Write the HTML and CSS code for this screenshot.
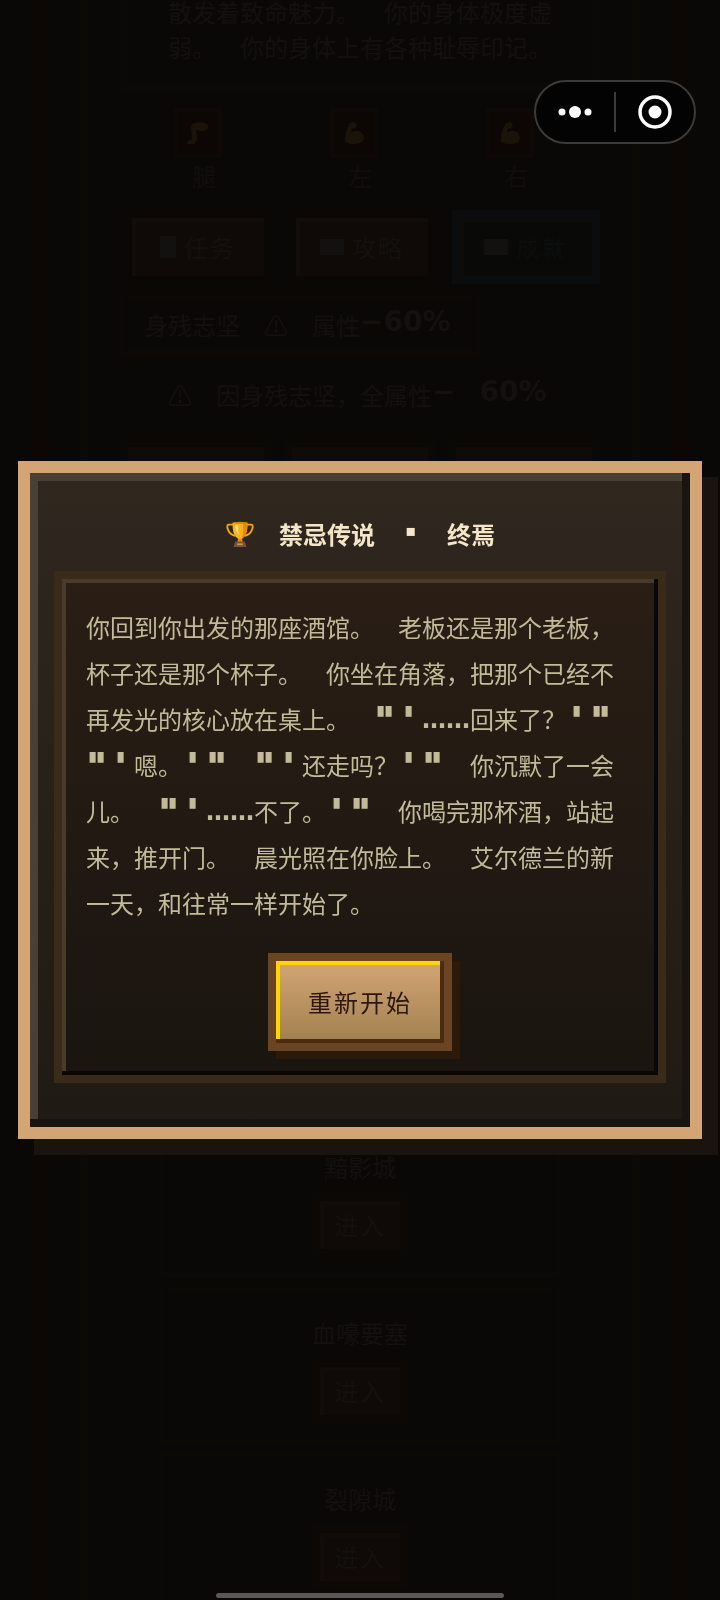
FILE: index.html
```html
<!DOCTYPE html>
<html lang="zh-CN">
<head>
    <meta charset="UTF-8">
    <meta name="viewport" content="width=device-width, initial-scale=1.0">
    <title>禁忌传说</title>
    <link rel="stylesheet" href="styles.css">
</head>
<body>
    <svg class="sprites" width="0" height="0" aria-hidden="true">
        <symbol id="arm" viewBox="0 0 24 24">
            <path d="M8 2l5-1 2 4-3 3-2-1-1 5c3-3 8-3 11 0 3 4 2 9-2 10-5 2-12 1-15-1C3 15 4 8 8 2z"/>
        </symbol>
        <symbol id="leg" viewBox="0 0 24 24">
            <path d="M6 3c6-3 14-2 16 1 1 4-2 6-6 6l-6-1 1 9-2 5H1l1-3 4-2L5 6z"/>
        </symbol>
    </svg>

    <div class="frame">
        <div class="page">
            <section class="intro">散发着致命魅力。　你的身体极度虚弱。　你的身体上有各种耻辱印记。</section>

            <div class="limbs">
                <div class="limb"><svg class="limb-icon"><use href="#leg"/></svg><span class="limb-name">腿</span></div>
                <div class="limb"><svg class="limb-icon"><use href="#arm"/></svg><span class="limb-name">左</span></div>
                <div class="limb"><svg class="limb-icon"><use href="#arm"/></svg><span class="limb-name">右</span></div>
            </div>

            <div class="menu">
                <button class="menu-button"><i class="note"></i>任务</button>
                <button class="menu-button"><i class="book"></i>攻略</button>
                <button class="menu-button blue"><i class="book"></i>成就</button>
            </div>

            <div class="status">身残志坚　⚠　属性<b>−60%</b></div>
            <p class="warning">⚠　因身残志坚，全属性<b>−</b>　<b>60%</b></p>

            <div class="slots">
                <div class="slot"></div>
                <div class="slot"></div>
                <div class="slot"></div>
            </div>

            <div class="cities">
                <div class="city"><span>黯影城</span><button class="enter">进入</button></div>
                <div class="city"><span>血嚎要塞</span><button class="enter">进入</button></div>
                <div class="city"><span>裂隙城</span><button class="enter">进入</button></div>
            </div>
        </div>
    </div>

    <div class="overlay">
        <div class="modal" role="dialog" aria-labelledby="ending-title">
            <h1 class="title" id="ending-title">
                <svg class="trophy" viewBox="0 0 30 30" aria-hidden="true">
                    <path d="M8 5H3c-2 0-2 2-1 5 1 4 4 6 8 7M22 5h5c2 0 2 2 1 5-1 4-4 6-8 7" fill="none" stroke="#f2a30f" stroke-width="2"/>
                    <path d="M7 3h16c0 9-1 14-6 17v3h-4v-3C8 17 7 12 7 3z" fill="#fbb01c"/>
                    <path d="M18 3h5c0 9-1 14-6 17 1-4 2-9 1-17z" fill="#e8890c"/>
                    <path d="M10 5h3c0 5 0 8 1 11-3-2-4-6-4-11z" fill="#ffe08a"/>
                    <ellipse cx="15" cy="3" rx="8" ry="1" fill="#d9820b"/>
                    <path d="M13 20h4l1 4h-6z" fill="#e8890c"/>
                    <path d="M10 23h10l2 6H8z" fill="#75523f"/>
                    <path d="M12 25h6v2h-6z" fill="#c9973c"/>
                </svg>
                <span>　禁忌传说　<span class="dot">▪</span>　终焉</span>
            </h1>
            <div class="story">
                <p class="story-text">你回到你出发的那座酒馆。　老板还是那个老板，杯子还是那个杯子。　你坐在角落，把那个已经不再发光的核心放在桌上。　<span class="quote">"</span><span class="quote">'</span><span class="ellipsis">……</span>回来了？<span class="quote">'</span><span class="quote">"</span><br><span class="quote">"</span><span class="quote">'</span>嗯。<span class="quote">'</span><span class="quote">"</span>　<span class="quote">"</span><span class="quote">'</span>还走吗？<span class="quote">'</span><span class="quote">"</span>　你沉默了一会儿。　<span class="quote">"</span><span class="quote">'</span><span class="ellipsis">……</span>不了。<span class="quote">'</span><span class="quote">"</span>　你喝完那杯酒，站起来，推开门。　晨光照在你脸上。　艾尔德兰的新一天，和往常一样开始了。</p>
                <button class="restart">重新开始</button>
            </div>
        </div>
    </div>

    <div class="capsule">
        <button class="capsule-button" aria-label="更多">
            <svg width="36" height="36" viewBox="0 0 36 36" fill="#fff">
                <circle cx="5" cy="18" r="3.5"/><circle cx="18" cy="18" r="6"/><circle cx="31" cy="18" r="3.5"/>
            </svg>
        </button>
        <button class="capsule-button" aria-label="关闭">
            <svg width="36" height="36" viewBox="0 0 36 36">
                <circle cx="18" cy="18" r="15" fill="none" stroke="#fff" stroke-width="3.5"/><circle cx="18" cy="18" r="6.5" fill="#fff"/>
            </svg>
        </button>
    </div>
    <div class="home-bar"></div>
</body>
</html>
```

FILE: styles.css
```css
* {
    box-sizing: border-box;
}

body {
    margin: 0;
    height: 100vh;
    overflow: hidden;
    background-color: #0a0806;
    color: #13100d;
    font-family: "Noto Sans CJK SC", sans-serif;
    font-size: 24px;
    line-height: 36px;
    text-spacing-trim: space-all;
}

button {
    font-family: inherit;
    font-size: 24px;
    line-height: 34px;
    color: inherit;
    border: none;
    cursor: pointer;
}

.sprites {
    position: absolute;
}

/* 背景页面 */
.frame {
    margin: 0 32px;
    padding: 0 32px;
    border: solid #0c0705;
    border-width: 0 16px;
}

.page {
    padding: 0 32px;
    border: solid #0c0a06;
    border-width: 0 8px;
}

.intro {
    margin-top: -6px;
    padding: 0 40px 20px;
    border: 8px solid #0b0907;
    border-top: none;
    line-height: 35px;
}

.limbs {
    display: grid;
    grid-template-columns: repeat(3, 1fr);
    padding: 16px 12px 0 0;
}

.limb {
    display: flex;
    flex-direction: column;
    align-items: center;
    color: #100d0b;
}

.limb-icon {
    width: 48px;
    height: 50px;
    padding: 8px;
    border: 4px solid #0e0906;
    background-color: #0c0705;
    fill: #1a1309;
}

.limb-name {
    padding-left: 12px;
}

.menu {
    display: flex;
    gap: 16px;
    padding: 16px 0 0 4px;
}

.menu-button {
    display: flex;
    flex: 1;
    align-items: center;
    justify-content: center;
    gap: 8px;
    height: 74px;
    padding: 0;
    letter-spacing: 2px;
    border: 8px solid #0b0705;
    background-color: #0f0a07;
    box-shadow: inset 4px 4px 0 #120d09;
}

.menu-button.blue {
    color: #0b0d0e;
    border-color: #0b0c0d;
    background-color: #090908;
    box-shadow: inset 4px 4px 0 #0d0c0a;
}

.note,
.book {
    width: 16px;
    height: 22px;
    background-color: #12110f;
}

.book {
    width: 24px;
    height: 16px;
}

.status {
    width: 360px;
    margin-top: 11px;
    padding: 8px 20px 6px;
    border: 4px solid #0c0805;
    border-bottom-width: 8px;
    white-space: nowrap;
}

.status b,
.warning b {
    font-family: "DejaVu Sans", sans-serif;
    font-size: 28px;
    line-height: 28px;
    vertical-align: 4px;
}

.warning {
    margin: 0;
    padding: 20px 48px 26px;
    white-space: nowrap;
}

.slots {
    display: grid;
    grid-template-columns: repeat(3, 1fr);
    gap: 12px;
}

.slot {
    height: 160px;
    border: 8px solid #0b0906;
    background-color: #0e0b09;
}

.cities {
    display: flex;
    flex-direction: column;
    gap: 10px;
    margin-top: 522px;
    padding: 0 40px;
}

.city {
    display: flex;
    flex-direction: column;
    align-items: center;
    gap: 8px;
    height: 156px;
    padding-top: 24px;
    border: 4px solid #0b0906;
}

.enter {
    width: 96px;
    height: 64px;
    letter-spacing: 2px;
    border: 8px solid #0b0805;
    background-color: #0f0a07;
    box-shadow: inset 4px 4px 0 #110c08;
}

/* 结局弹窗 */
.overlay {
    position: fixed;
    inset: 0;
    display: flex;
    align-items: center;
    justify-content: center;
}

.modal {
    width: 95%;
    padding: 43px 24px 44px;
    border: 12px solid #d4a574;
    background: linear-gradient(180deg, #30271f 0%, #1f1a13 100%);
    box-shadow: inset -8px -8px 0 #1a1410, inset 8px 8px 0 #4a3f35, 16px 16px 0 #1a1410;
}

.title {
    display: flex;
    align-items: center;
    justify-content: center;
    margin: 0 0 19px;
    font-size: 24px;
    line-height: 36px;
    color: #f5e6c8;
}

.trophy {
    width: 30px;
    height: 28px;
}

.dot {
    display: inline-block;
    width: 24px;
    font-family: "DejaVu Sans", sans-serif;
    font-size: 16px;
    line-height: 16px;
    text-align: center;
    vertical-align: 8px;
}

.story {
    display: flex;
    flex-direction: column;
    align-items: center;
    gap: 27px;
    padding: 25px 24px 24px;
    border: 8px solid #3a2a1a;
    background: linear-gradient(180deg, #2a1e15 0%, #1a1510 100%);
    box-shadow: inset -4px -4px 0 #0a0806, inset 4px 4px 0 #4a3a2a;
}

.story-text {
    width: 100%;
    margin: 0;
    line-height: 46px;
    color: #c3ba9a;
}

.quote {
    display: inline-block;
    width: 24px;
    padding-left: 1px;
    font-family: "DejaVu Sans Mono", monospace;
    font-size: 32px;
    font-weight: bold;
    line-height: 32px;
    vertical-align: -1px;
    -webkit-text-stroke: 2px #c3ba9a;
}

.ellipsis {
    font-family: "DejaVu Sans", sans-serif;
    font-weight: bold;
    line-height: 24px;
    vertical-align: 1px;
}

.restart {
    padding: 24px 32px;
    letter-spacing: 2px;
    color: #2b1810;
    border: 8px solid #6b4423;
    background: linear-gradient(180deg, #d4a574 0%, #a08050 100%);
    box-shadow: inset -4px -4px 0 #4a2c10, inset 4px 4px 0 #ffd700, 8px 8px 0 #2b1a0a;
}

/* 小程序胶囊按钮 */
.capsule {
    position: fixed;
    top: 80px;
    right: 24px;
    display: flex;
    align-items: center;
    width: 162px;
    height: 64px;
    border: 2px solid #3c3b3a;
    border-radius: 32px;
    background-color: #040303;
}

.capsule-button {
    display: flex;
    flex: 1;
    justify-content: center;
    padding: 2px 0;
    background: none;
}

.capsule-button + .capsule-button {
    border-left: 2px solid #3c3b3a;
}

.home-bar {
    position: fixed;
    left: 30%;
    right: 30%;
    bottom: 2px;
    height: 5px;
    border-radius: 3px;
    background-color: #5a5754;
}
```
